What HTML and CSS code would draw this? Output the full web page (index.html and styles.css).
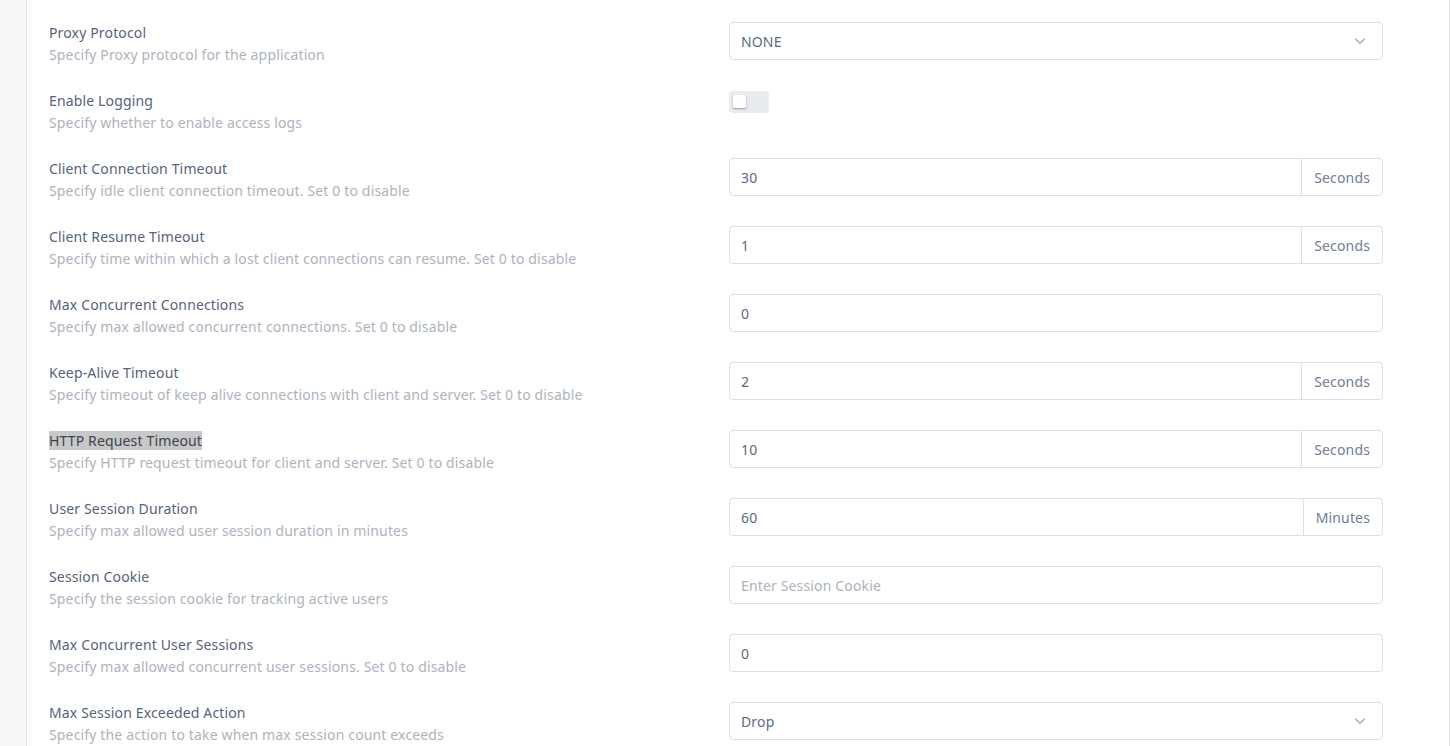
FILE: index.html
```html
<!DOCTYPE html>
<html lang="en">
<head>
<meta charset="utf-8">
<title>Settings</title>
<link rel="stylesheet" href="styles.css">
</head>
<body>
<div class="card">
  <div class="form">
    <div class="info"><div class="label">Proxy Protocol</div><div class="desc">Specify Proxy protocol for the application</div></div>
    <div class="control"><div class="select"><span>NONE</span><svg class="chev" width="12" height="8" viewBox="0 0 12 8"><path d="M1 1.5 6 6.5 11 1.5" fill="none" stroke="#9aa3b1" stroke-width="1.2"/></svg></div></div>

    <div class="info"><div class="label">Enable Logging</div><div class="desc">Specify whether to enable access logs</div></div>
    <div class="control"><div class="toggle"><div class="knob"></div></div></div>

    <div class="info"><div class="label">Client Connection Timeout</div><div class="desc">Specify idle client connection timeout. Set 0 to disable</div></div>
    <div class="control"><div class="group"><input class="field" value="30"><span class="addon">Seconds</span></div></div>

    <div class="info"><div class="label">Client Resume Timeout</div><div class="desc">Specify time within which a lost client connections can resume. Set 0 to disable</div></div>
    <div class="control"><div class="group"><input class="field" value="1"><span class="addon">Seconds</span></div></div>

    <div class="info"><div class="label">Max Concurrent Connections</div><div class="desc">Specify max allowed concurrent connections. Set 0 to disable</div></div>
    <div class="control"><div class="group"><input class="field" value="0"></div></div>

    <div class="info"><div class="label">Keep-Alive Timeout</div><div class="desc">Specify timeout of keep alive connections with client and server. Set 0 to disable</div></div>
    <div class="control"><div class="group"><input class="field" value="2"><span class="addon">Seconds</span></div></div>

    <div class="info"><div class="label"><span class="selected">HTTP Request Timeout</span></div><div class="desc">Specify HTTP request timeout for client and server. Set 0 to disable</div></div>
    <div class="control"><div class="group"><input class="field" value="10"><span class="addon">Seconds</span></div></div>

    <div class="info"><div class="label">User Session Duration</div><div class="desc">Specify max allowed user session duration in minutes</div></div>
    <div class="control"><div class="group"><input class="field" value="60"><span class="addon">Minutes</span></div></div>

    <div class="info"><div class="label">Session Cookie</div><div class="desc">Specify the session cookie for tracking active users</div></div>
    <div class="control"><div class="group"><input class="field" placeholder="Enter Session Cookie"></div></div>

    <div class="info"><div class="label">Max Concurrent User Sessions</div><div class="desc">Specify max allowed concurrent user sessions. Set 0 to disable</div></div>
    <div class="control"><div class="group"><input class="field" value="0"></div></div>

    <div class="info"><div class="label">Max Session Exceeded Action</div><div class="desc">Specify the action to take when max session count exceeds</div></div>
    <div class="control"><div class="select"><span>Drop</span><svg class="chev" width="12" height="8" viewBox="0 0 12 8"><path d="M1 1.5 6 6.5 11 1.5" fill="none" stroke="#9aa3b1" stroke-width="1.2"/></svg></div></div>
  </div>
</div>
</body>
</html>
```

FILE: styles.css
```css
html, body {
  margin: 0;
  padding: 0;
  background: #f7f8fa;
  height: 746px;
  overflow: hidden;
}
body {
  font-family: "Noto Sans", "Open Sans", sans-serif;
  font-size: 14px;
  letter-spacing: 0.15px;
}
.card {
  margin-left: 26px;
  width: 1378px;
  min-height: 746px;
  background: #ffffff;
  border-left: 1px solid #dfe2e7;
  border-right: 1px solid #dfe2e7;
  padding: 22px 22px 0 22px;
}
.form {
  display: grid;
  grid-template-columns: 680px 654px;
  row-gap: 24px;
}
.info {
  height: 44px;
}
.label {
  line-height: 22px;
  color: #56637c;
  white-space: nowrap;
}
.selected {
  background: #c8c8c8;
  color: #3c4350;
}
.desc {
  line-height: 22px;
  color: #adb3be;
  white-space: nowrap;
}
.control {
  height: 44px;
}
.select {
  box-sizing: border-box;
  height: 38px;
  border: 1px solid #dcdfe5;
  border-radius: 4px;
  display: flex;
  align-items: center;
  justify-content: space-between;
  padding: 0 16px 0 11px;
  color: #5b6a83;
  background: #fff;
}
.chev {
  display: block;
}
.group {
  box-sizing: border-box;
  height: 38px;
  border: 1px solid #dcdfe5;
  border-radius: 4px;
  display: flex;
  overflow: hidden;
  background: #fff;
}
.field {
  flex: 1;
  min-width: 0;
  border: 0;
  outline: none;
  padding: 0 11px;
  font: inherit;
  letter-spacing: inherit;
  color: #5b6a83;
  background: transparent;
}
.field::placeholder {
  color: #adb3be;
}
.addon {
  display: flex;
  align-items: center;
  padding: 0 12px;
  border-left: 1px solid #dcdfe5;
  color: #6f7d94;
}
.toggle {
  margin-top: 1px;
  width: 40px;
  height: 22px;
  border-radius: 4px;
  background: #e8ebef;
  position: relative;
}
.knob {
  position: absolute;
  left: 4px;
  top: 4px;
  width: 13px;
  height: 13px;
  border-radius: 2px;
  background: #fff;
  box-shadow: 0 1px 2px rgba(0, 0, 0, 0.35);
}
```
